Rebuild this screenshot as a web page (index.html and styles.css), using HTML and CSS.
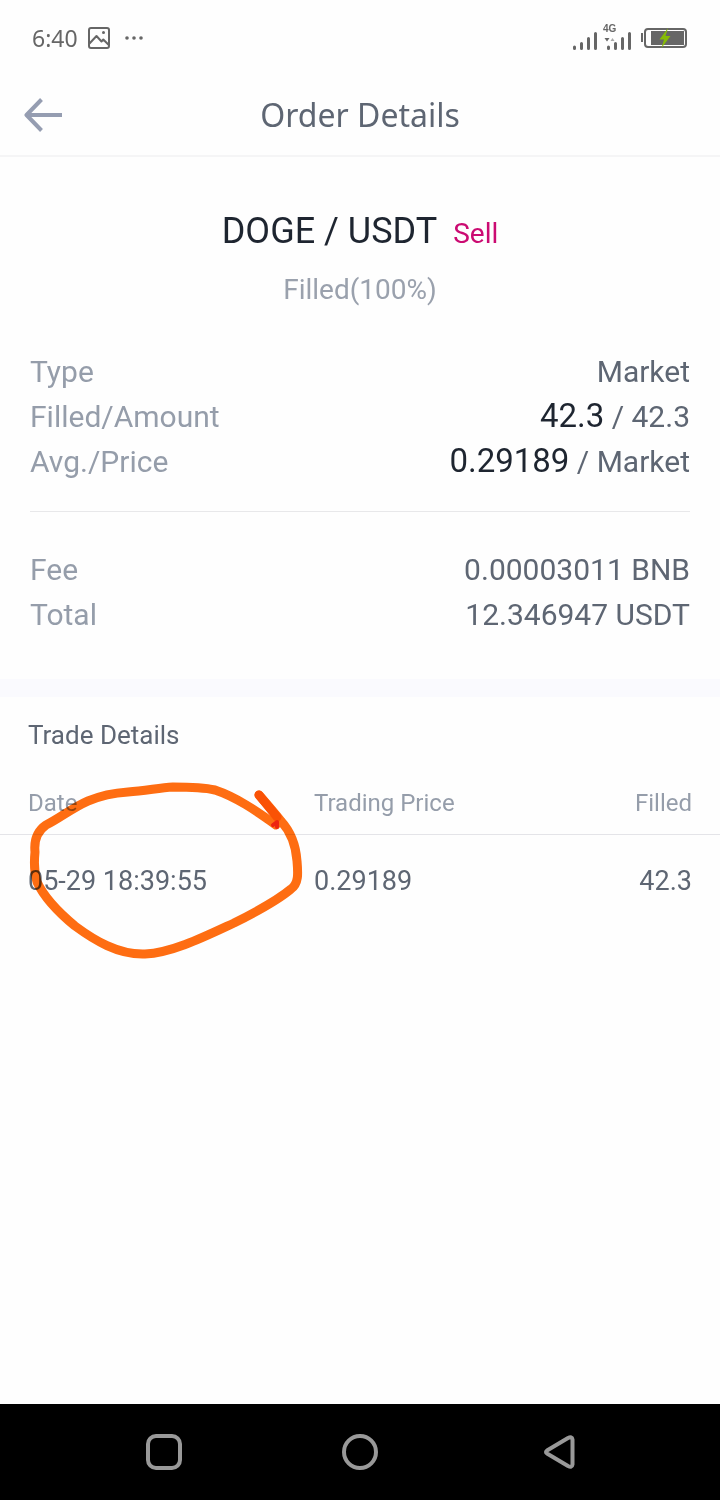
FILE: index.html
```html
<!DOCTYPE html>
<html lang="en">
<head>
<meta charset="utf-8">
<meta name="viewport" content="width=device-width, initial-scale=1">
<title>Order Details</title>
<link rel="stylesheet" href="styles.css">
</head>
<body>
<div class="screen">
  <div class="status">
    <div class="status-left">
      <span class="clock">6:40</span>
      <svg width="22" height="22" viewBox="0 0 22 22" fill="none" stroke="#666" stroke-width="2" aria-hidden="true">
        <rect x="1" y="1" width="20" height="20" rx="2"/>
        <path d="M1.500 16.500L8.500 9l5 5.500 1.800-2 5.500 5.500" stroke-linejoin="round"/>
        <circle cx="15.500" cy="5.500" r="1.500" fill="#666" stroke="none"/>
      </svg>
      <svg width="24" height="22" viewBox="0 0 24 22" fill="#666" aria-hidden="true">
        <circle cx="7" cy="11" r="1.800"/><circle cx="14" cy="11" r="1.800"/><circle cx="21" cy="11" r="1.800"/>
      </svg>
    </div>
    <div class="status-right">
      <svg width="24" height="28" viewBox="0 0 24 28" stroke="#666" stroke-width="3" stroke-linecap="round" aria-hidden="true">
        <path d="M1.500 23v1.500M8.500 19.500v5M15.500 14.500v10M22.500 9.500v15"/>
      </svg>
      <div class="signal">
        <span class="network">4G</span>
        <svg width="28" height="28" viewBox="0 0 28 28" aria-hidden="true">
          <path d="M5.500 23v1.500M12.500 19.500v5M19.500 14.500v10M26.500 9.500v15" stroke="#666" stroke-width="3" stroke-linecap="round"/>
          <path d="M1.500 14h5L4 17.500z" fill="#666"/><path d="M7.500 17h4l-2-3z" fill="#aaa"/>
        </svg>
      </div>
      <svg class="battery" width="46" height="22" viewBox="0 0 46 22" aria-hidden="true">
        <path d="M1 6v9" stroke="#666" stroke-width="2"/>
        <rect x="4" y="2" width="41" height="18" rx="3" fill="none" stroke="#666" stroke-width="2"/>
        <rect x="10" y="4" width="33" height="14" fill="#666"/>
        <path d="M27 1L18.500 12.500h4.500L20.500 21 29.500 9h-5z" fill="#86bc05"/>
      </svg>
    </div>
  </div>

  <header class="header">
    <button class="back" type="button" aria-label="Back">
      <svg width="40" height="36" viewBox="0 0 40 36" fill="none" stroke="#959db1" stroke-width="4" aria-hidden="true">
        <path d="M38 18H3M17.500 2.500L2.500 18l15 15.500" stroke-linejoin="round"/>
      </svg>
    </button>
    <h1 class="title">Order Details</h1>
  </header>

  <main class="main">
    <section class="summary">
      <div class="pair"><h2 class="symbol">DOGE / USDT</h2><span class="side">Sell</span></div>
      <p class="state">Filled(100%)</p>
      <dl class="facts">
        <div class="fact"><dt>Type</dt><dd>Market</dd></div>
        <div class="fact"><dt>Filled/Amount</dt><dd><b class="strong">42.3</b> / 42.3</dd></div>
        <div class="fact"><dt>Avg./Price</dt><dd><b class="strong">0.29189</b> / Market</dd></div>
      </dl>
      <dl class="facts facts-ruled">
        <div class="fact"><dt>Fee</dt><dd>0.00003011 BNB</dd></div>
        <div class="fact"><dt>Total</dt><dd>12.346947 USDT</dd></div>
      </dl>
    </section>

    <section class="trades">
      <h2 class="trades-title">Trade Details</h2>
      <table class="table">
        <thead><tr><th class="col-date">Date</th><th class="col-price">Trading Price</th><th class="col-filled">Filled</th></tr></thead>
        <tbody><tr><td>05-29 18:39:55</td><td>0.29189</td><td class="col-filled">42.3</td></tr></tbody>
      </table>
      <svg class="marker" width="290" height="190" viewBox="20 777 290 190" fill="none" stroke-linecap="round" stroke-linejoin="round" aria-hidden="true">
        <path d="M276 825C255 810 236 797 215 790C202 787 188 787 173 787C158 788 145 791 128 792C113 793 100 796 88 801C72 808 60 818 46 825C36 832 34 842 35 852C34 862 34 872 37 882C44 897 58 912 75 926C94 940 118 955 145 954C172 953 206 936 234 923C256 912 278 900 291 889C299 883 298 873 297 861C296 847 291 832 281 821C273 811 266 803 259 795" stroke="#ff6d12" stroke-width="9"/>
        <path d="M259 795L277 817" stroke="#fb5206" stroke-width="9"/>
        <path d="M273 825l4-3v5" stroke="#ee2410" stroke-width="4"/>
      </svg>
    </section>
  </main>

  <nav class="nav" aria-label="System">
    <button class="nav-button" type="button" aria-label="Recent apps"><svg width="36" height="36" viewBox="0 0 36 36" fill="none" stroke="#999" stroke-width="4"><rect x="2" y="2" width="32" height="32" rx="8"/></svg></button>
    <button class="nav-button" type="button" aria-label="Home"><svg width="36" height="36" viewBox="0 0 36 36" fill="none" stroke="#999" stroke-width="4"><circle cx="18" cy="18" r="16"/></svg></button>
    <button class="nav-button" type="button" aria-label="Back"><svg width="40" height="36" viewBox="0 0 40 36" fill="none" stroke="#999" stroke-width="4"><path d="M11 16.500L32 4Q36 2 36.500 5.500V30.500Q36 34 32 32L11 19.500Q9 18 11 16.500Z" stroke-linejoin="round"/></svg></button>
  </nav>
</div>
</body>
</html>
```
FILE: styles.css
```css
* { box-sizing: border-box; margin: 0; padding: 0; }

body {
  background: #fefefe;
  color: #5e6673;
  font-family: Roboto, "Liberation Sans", sans-serif;
}

h1, h2, th, b { font-weight: 400; }

button { border: 0; background: none; display: flex; cursor: pointer; }

svg { display: block; flex: none; }

.screen { min-height: 100vh; display: flex; flex-direction: column; }

.status {
  height: 75px;
  padding: 0 33px 0 32px;
  display: flex;
  align-items: center;
  justify-content: space-between;
  color: #666;
}

.status-left, .status-right { display: flex; align-items: center; gap: 10px; }
.clock { font-family: "Noto Sans", sans-serif; font-size: 23px; line-height: 32px; }
.signal { position: relative; margin-left: -4px; }
.network {
  position: absolute;
  top: -1px;
  left: 0;
  font: 700 10px/12px "Liberation Sans", sans-serif;
}

.header {
  height: 82px;
  padding: 0 24px;
  display: grid;
  grid-template-columns: 40px 1fr 40px;
  align-items: center;
  border-bottom: 2px solid #f5f5f6;
}

.title { font-size: 32px; line-height: 40px; text-align: center; font-family: "Noto Sans", sans-serif; }

.main { flex: 1; }

.summary { padding: 50px 30px 42px; border-bottom: 18px solid #fafafe; }

.pair { display: flex; justify-content: center; align-items: baseline; gap: 16px; }
.symbol { color: #1e2530; font-size: 36px; line-height: 48px; }
.side { color: #cb0b72; font-size: 28px; }

.state { margin-top: 15px; color: #9aa1ad; font-size: 28px; line-height: 40px; text-align: center; }

.facts { margin-top: 39px; font-size: 30px; }
.facts-ruled { margin-top: 27px; padding-top: 35px; border-top: 1px solid #e8e8ea; }
.fact { display: flex; justify-content: space-between; line-height: 45px; }
.fact dt { color: #959daa; }
.strong { color: #1e2530; font-size: 33px; line-height: 40px; }

.trades { position: relative; padding-top: 18px; }
.trades-title { padding: 0 28px; font-size: 26px; line-height: 40px; }

.table { width: 100%; margin-top: 24px; border-collapse: collapse; table-layout: fixed; text-align: left; }
.table th { padding: 8px 0 15px; color: #959daa; font-size: 24px; line-height: 32px; border-bottom: 1px solid #e4e4e8; }
.table td { padding: 28px 0; font-size: 27px; line-height: 36px; }
.table th:first-child, .table td:first-child { padding-left: 28px; }
.table .col-date { width: 314px; }
.table .col-filled { padding-right: 28px; text-align: right; }

.marker { position: absolute; top: 80px; left: 20px; mix-blend-mode: multiply; pointer-events: none; }

.nav {
  height: 96px;
  padding: 0 66px;
  display: grid;
  grid-template-columns: repeat(3, 1fr);
  align-items: center;
  justify-items: center;
  background: #000;
}
```
